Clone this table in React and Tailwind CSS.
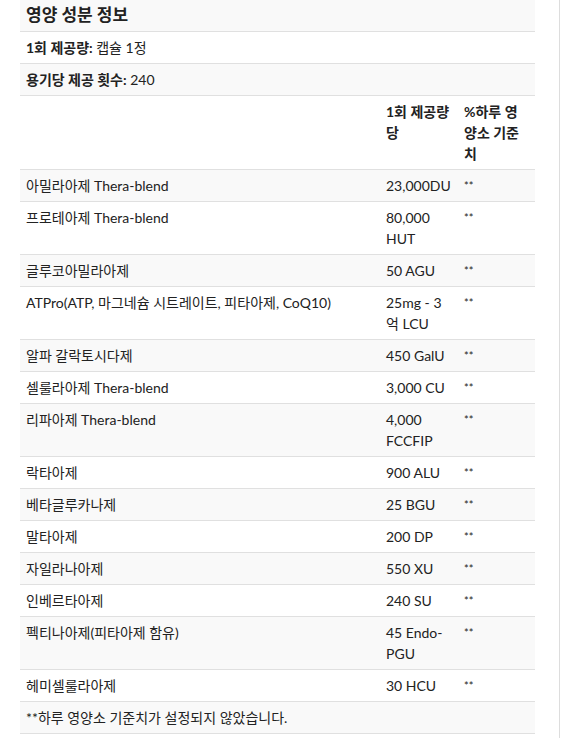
import React from "react";

const rows = [
  { name: "아밀라아제 Thera-blend", amount: "23,000DU" },
  { name: "프로테아제 Thera-blend", amount: "80,000 HUT" },
  { name: "글루코아밀라아제", amount: "50 AGU" },
  { name: "ATPro(ATP, 마그네슘 시트레이트, 피타아제, CoQ10)", amount: "25mg - 3억 LCU" },
  { name: "알파 갈락토시다제", amount: "450 GalU" },
  { name: "셀룰라아제 Thera-blend", amount: "3,000 CU" },
  { name: "리파아제 Thera-blend", amount: "4,000 FCCFIP" },
  { name: "락타아제", amount: "900 ALU" },
  { name: "베타글루카나제", amount: "25 BGU" },
  { name: "말타아제", amount: "200 DP" },
  { name: "자일라나아제", amount: "550 XU" },
  { name: "인베르타아제", amount: "240 SU" },
  { name: "펙티나아제(피타아제 함유)", amount: "45 Endo-PGU" },
  { name: "헤미셀룰라아제", amount: "30 HCU" },
];

/* ───────────────── Row ───────────────── */
function Row({ shaded, children, className = "" }) {
  return (
    <div
      className={`flex border-b border-[#e0e0e0] ${
        shaded ? "bg-[#f9f9f9]" : "bg-white"
      } ${className}`}
    >
      {children}
    </div>
  );
}

export default function App() {
  return (
    <div
      className="flex bg-white text-[14px] leading-[21px] text-[#222]"
      style={{ fontFamily: 'Lato, "Noto Sans CJK KR", sans-serif' }}
    >
      <div className="w-[560px] min-h-[738px] border-r border-[#dddddd] pl-5">
        <div className="w-[515px]">
          {/* Title */}
          <Row shaded>
            <h2 className="px-1.5 pt-[3px] pb-1 text-[17px] leading-[24px] font-bold">
              영양 성분 정보
            </h2>
          </Row>

          <Row>
            <p className="px-1.5 py-[5px]">
              <span className="font-bold">1회 제공량:</span> 캡슐 1정
            </p>
          </Row>
          <Row shaded>
            <p className="px-1.5 py-[5px]">
              <span className="font-bold">용기당 제공 횟수:</span> 240
            </p>
          </Row>

          {/* Header */}
          <Row className="font-bold">
            <div className="flex-1 px-1.5 py-[5px]" />
            <div className="w-[78px] pl-2 py-[5px]">
              1회 제공량
              <br />당
            </div>
            <div className="w-[79px] px-2 py-[5px]">%하루 영양소 기준치</div>
          </Row>

          {rows.map((r, i) => (
            <Row key={r.name} shaded={i % 2 === 0}>
              <div className="flex-1 px-1.5 py-[5px]">{r.name}</div>
              <div className="w-[78px] px-2 py-[5px]">{r.amount}</div>
              <div className="w-[79px] px-2 py-[5px] text-[11px]">**</div>
            </Row>
          ))}

          <Row shaded>
            <p className="px-1.5 py-[5px]">**하루 영양소 기준치가 설정되지 않았습니다.</p>
          </Row>
        </div>
      </div>
    </div>
  );
}
